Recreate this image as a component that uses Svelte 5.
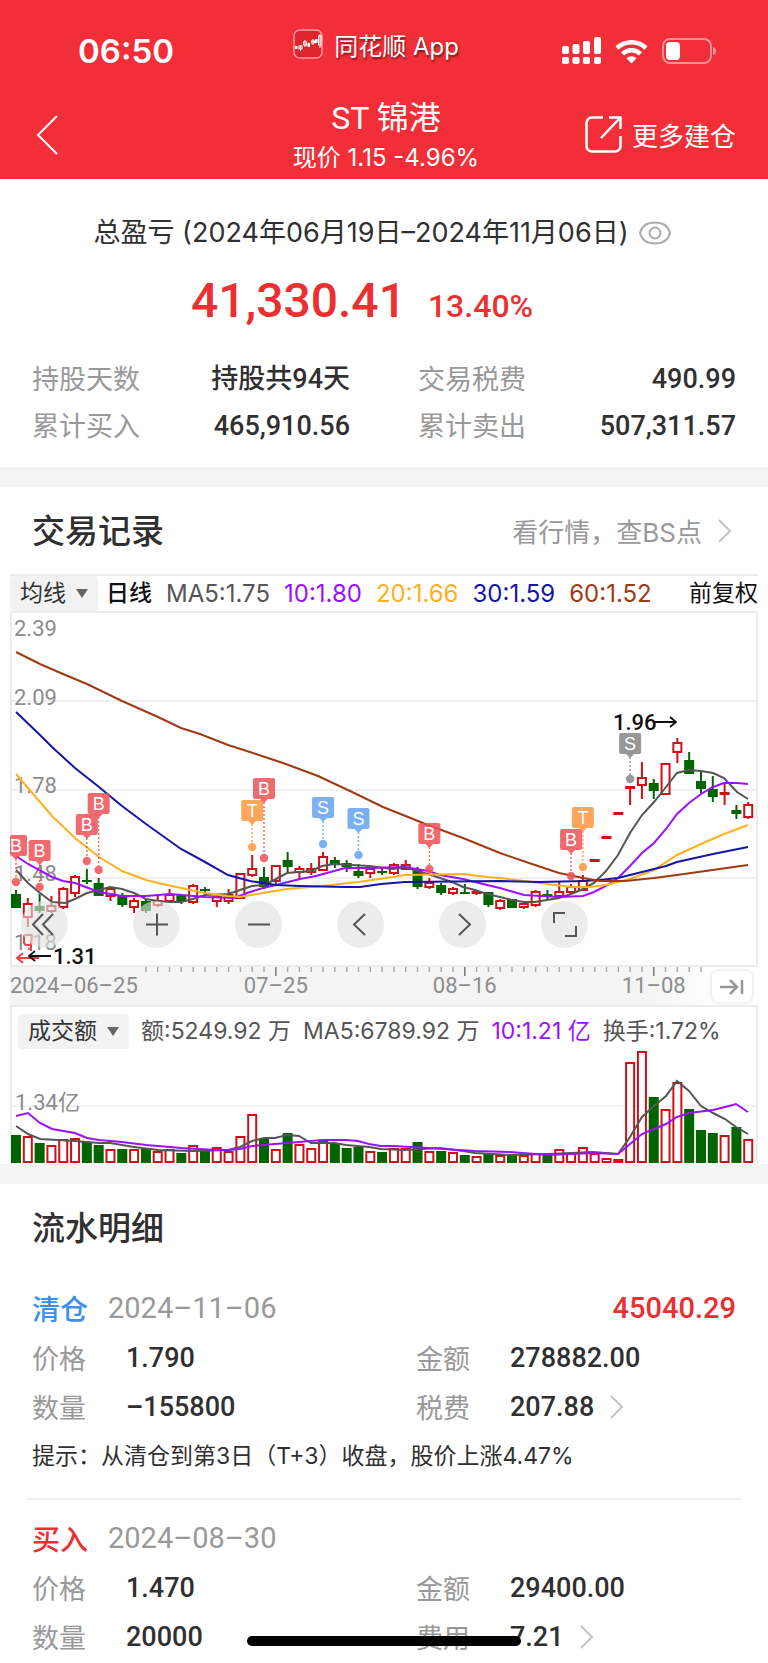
<script>
  const STEP = 11.81;
  const FIRST_X = 16;
  const x = (i) => FIRST_X + i * STEP;

  // [up/down, high, body top, body bottom, low, volume top]
  const candles = [
    ['d', 278, 282, 296, 296, 129],
    ['u', 286, 292, 305, 315, 130],
    ['d', 282, 294, 299, 301, 137],
    ['u', 284, 294, 299, 301, 139],
    ['u', 275, 277, 295, 297, 133],
    ['u', 263, 265, 281, 285, 132],
    ['d', 257, 268, 270, 272, 136],
    ['d', 266, 271, 284, 284, 139],
    ['u', 275, 277, 284, 289, 143],
    ['d', 281, 283, 293, 295, 143],
    ['u', 286, 289, 295, 301, 143],
    ['d', 287, 289, 299, 301, 143],
    ['u', 284, 289, 293, 295, 145],
    ['u', 277, 283, 289, 291, 143],
    ['d', 283, 283, 290, 292, 147],
    ['u', 272, 274, 290, 292, 139],
    ['d', 275, 277, 279, 282, 145],
    ['u', 283, 285, 289, 295, 141],
    ['u', 277, 283, 289, 292, 145],
    ['u', 262, 262, 286, 286, 130],
    ['u', 243, 257, 263, 265, 108],
    ['d', 255, 265, 275, 277, 132],
    ['u', 253, 254, 269, 272, 143],
    ['d', 240, 248, 255, 261, 127],
    ['u', 254, 257, 260, 268, 138],
    ['u', 251, 257, 260, 263, 142],
    ['u', 240, 245, 258, 258, 135],
    ['d', 245, 248, 253, 256, 138],
    ['d', 248, 251, 255, 260, 142],
    ['d', 252, 259, 264, 266, 141],
    ['u', 256, 257, 261, 266, 145],
    ['d', 255, 259, 260, 263, 146],
    ['u', 251, 253, 261, 263, 142],
    ['u', 248, 253, 257, 258, 142],
    ['d', 255, 257, 275, 277, 136],
    ['u', 266, 271, 275, 277, 145],
    ['d', 271, 273, 281, 283, 145],
    ['u', 275, 277, 281, 283, 146],
    ['d', 272, 280, 281, 281, 149],
    ['u', 278, 280, 281, 283, 150],
    ['d', 280, 280, 293, 295, 147],
    ['u', 287, 289, 296, 298, 149],
    ['d', 287, 287, 296, 296, 149],
    ['u', 290, 292, 295, 297, 149],
    ['u', 278, 280, 293, 295, 147],
    ['d', 278, 282, 284, 288, 148],
    ['u', 270, 280, 284, 285, 143],
    ['u', 272, 275, 280, 282, 147],
    ['u', 263, 269, 278, 278, 141],
    ['u', 248, 248, 249, 249, 147],
    ['u', 225, 225, 226, 226, 152],
    ['u', 201, 201, 202, 202, 153],
    ['u', 175, 175, 176, 193, 56],
    ['u', 150, 166, 173, 187, 45],
    ['d', 167, 171, 179, 187, 91],
    ['u', 151, 152, 182, 182, 103],
    ['u', 126, 131, 140, 151, 76],
    ['d', 140, 148, 162, 162, 103],
    ['d', 159, 169, 177, 181, 124],
    ['d', 164, 177, 185, 190, 127],
    ['u', 172, 181, 182, 193, 129],
    ['d', 193, 198, 202, 207, 121],
    ['u', 190, 193, 205, 207, 133]
  ];

  const averages = [
    {
      color: '#555555',
      points:
        '16,258 28,271 40,281 52,290 65,291 75,287 87,281 99,278 110,275 122,277 134,281 146,287 158,289 170,290 181,290 193,287 205,283 228,282 240,278 252,274 264,273 276,267 287,261 311,259 322,254 334,252 369,254 393,257 405,255 420,260 428,262 440,266 452,270 463,275 475,278 487,282 500,285 512,288 524,290 535,290 547,288 559,286 571,282 583,277 594,271 606,259 618,243 630,221 642,203 654,190 666,175 677,161 689,158 701,159 713,161 724,166 737,180 748,187'
    },
    {
      color: '#9b10ff',
      points:
        '16,244 28,252 52,265 63,269 75,271 99,280 122,284 146,284 170,282 205,285 234,286 250,280 263,276 276,273 300,267 316,264 345,256 369,256 405,255 428,259 440,263 463,267 487,273 500,276 524,283 559,285 583,284 594,280 606,274 618,266 630,254 642,241 654,231 666,217 677,202 689,191 701,182 713,175 724,171 737,171 748,172'
    },
    {
      color: '#ffb020',
      points:
        '16,162 28,176 52,204 75,226 99,245 122,259 146,268 158,271 181,276 205,281 228,284 240,285 263,281 287,277 322,274 358,270 393,265 405,263 463,262 487,265 500,266 524,269 547,272 571,275 590,275 606,273 630,267 654,258 677,243 701,232 724,222 748,213'
    },
    {
      color: '#1515a8',
      points:
        '16,100 40,123 52,135 75,156 99,175 122,194 146,212 181,237 205,250 228,263 250,269 276,273 300,274 345,275 360,275 381,272 405,270 500,269 540,270 583,269 600,268 618,266 642,260 666,254 677,250 713,242 748,235'
    },
    {
      color: '#a03a12',
      points:
        '16,40 40,52 63,62 87,72 122,89 158,105 181,116 200,122 228,133 250,140 283,151 318,164 350,179 383,195 428,213 463,226 500,241 529,251 559,261 583,266 600,269 625,269 654,266 677,263 748,253'
    }
  ];

  const volumeAverages = [
    {
      color: '#555555',
      points:
        '16,120 28,128 40,133 75,135 99,137 110,137 134,141 158,144 193,145 228,144 240,141 252,135 264,132 275,132 287,129 299,130 311,137 334,137 346,139 369,141 381,143 405,144 440,142 463,145 475,147 510,149 548,148 593,146 618,148 630,131 642,111 654,100 666,90 677,75 689,85 701,100 713,107 725,113 736,121 748,128'
    },
    {
      color: '#9b10ff',
      points:
        '16,110 28,107 40,117 52,123 75,127 87,132 99,134 122,136 146,139 170,141 181,142 216,144 228,144 240,143 252,140 275,138 299,136 322,134 346,134 358,135 369,138 381,140 393,140 428,142 475,145 510,146 548,149 571,148 593,147 618,148 642,128 654,123 666,118 677,111 689,107 713,104 725,101 736,98 748,106'
    }
  ];

  const markers = [
    { i: 0, label: 'B', y: 223, dot: 270 },
    { i: 2, label: 'B', y: 228, dot: 275 },
    { i: 6, label: 'B', y: 202, dot: 249 },
    { i: 7, label: 'B', y: 181, dot: 258 },
    { i: 20, label: 'T', y: 188, dot: 235 },
    { i: 21, label: 'B', y: 166, dot: 246 },
    { i: 26, label: 'S', y: 185, dot: 232 },
    { i: 29, label: 'S', y: 196, dot: 243 },
    { i: 35, label: 'B', y: 211, dot: 257 },
    { i: 47, label: 'B', y: 217, dot: 264 },
    { i: 48, label: 'T', y: 195, dot: 255 },
    { i: 52, label: 'S', y: 121, dot: 167, muted: true }
  ];
  const markerColors = { B: '#ee5258', T: '#ff9640', S: '#64a4f2' };
  const markerColor = (m) => (m.muted ? '#858585' : markerColors[m.label]);
  // the first flag is cut by the frame's left side
  const markerLeft = (m) => Math.max(x(m.i) - 11, 10);

  const priceLabels = [
    { text: '2.39', y: 24 },
    { text: '2.09', y: 93 },
    { text: '1.78', y: 181 },
    { text: '1.48', y: 269 },
    { text: '1.18', y: 338 }
  ];

  const ticks = Array.from({ length: 48 }, (_, n) => n + 11);
  const dates = [
    { i: 22, text: '07–25' },
    { i: 38, text: '08–16' },
    { i: 54, text: '11–08' }
  ];

  const summary = [
    ['持股天数', '持股共94天'],
    ['交易税费', '490.99'],
    ['累计买入', '465,910.56'],
    ['累计卖出', '507,311.57']
  ];

  const indicators = [
    { text: 'MA5:1.75', cls: 'ma5' },
    { text: '10:1.80', cls: 'ma10' },
    { text: '20:1.66', cls: 'ma20' },
    { text: '30:1.59', cls: 'ma30' },
    { text: '60:1.52', cls: 'ma60' }
  ];

  const controls = [
    { name: '最早', d: 'M22 13 12 23.500l10 10.500M32 13 22 23.500l10 10.500' },
    { name: '放大', d: 'M13 23.500h22M24 12.500v22' },
    { name: '缩小', d: 'M13 23.500h22' },
    { name: '向左', d: 'M28 13 17 23.500 28 34' },
    { name: '向右', d: 'M20 13 31 23.500 20 34' },
    { name: '全屏', d: 'M13 22v-10h11M35 25v10h-11' }
  ];

  const records = [
    {
      type: '清仓',
      date: '2024–11–06',
      profit: '45040.29',
      price: '1.790',
      amount: '278882.00',
      count: '–155800',
      feeLabel: '税费',
      fee: '207.88',
      tip: '提示：从清仓到第3日（T+3）收盘，股价上涨4.47%'
    },
    {
      type: '买入',
      date: '2024–08–30',
      price: '1.470',
      amount: '29400.00',
      count: '20000',
      feeLabel: '费用',
      fee: '7.21'
    }
  ];
</script>

<div class="page">
  <header>
    <div class="status">
      <span class="time">06:50</span>
      <span class="app-name">
        <svg width="30" height="30" viewBox="0 0 30 30">
          <rect x="1" y="1" width="28" height="28" rx="6" fill="#e0242c" stroke="#ff9a9e" stroke-width="1.500" />
          <g stroke="#fff" fill="none" stroke-width="1">
            <path d="M7.500 16v6M12 11v7M20 10v6M27 5v14" />
            <rect x="6" y="17" width="3" height="3" />
            <rect x="10.500" y="13" width="3" height="3" />
            <rect x="18.500" y="12" width="3" height="2" />
            <rect x="25.500" y="7" width="2.500" height="9" />
          </g>
          <path d="M2 17h2.500v3H2zM14.500 14h2.500v4h-2.500zM22 10h2.500v4h-2.500z" fill="#fff" />
        </svg>
        同花顺 App
      </span>
      <span class="status-icons">
        <svg width="39" height="28" viewBox="0 0 39 28" fill="#fff">
          <rect x="0" y="9" width="7" height="8" rx="2" />
          <rect x="10.500" y="7" width="7" height="10" rx="2" />
          <rect x="21" y="4" width="7" height="13" rx="2" />
          <rect x="32" y="0" width="7" height="17" rx="2" />
          <rect x="0" y="20" width="7" height="7" rx="2" />
          <rect x="10.500" y="20" width="7" height="7" rx="2" />
          <rect x="21" y="20" width="7" height="7" rx="2" />
          <rect x="32" y="20" width="7" height="7" rx="2" />
        </svg>
        <svg width="33" height="25" viewBox="0 0 33 25" fill="none" stroke="#fff" stroke-width="4.500">
          <path d="M2 9a21 21 0 0 1 29 0" />
          <path d="M7.500 14.800a13 13 0 0 1 18 0" />
          <path d="M16.500 24.500l-5-5.200a7.200 7.200 0 0 1 10 0z" fill="#fff" stroke="none" />
        </svg>
        <svg width="54" height="26" viewBox="0 0 54 26">
          <rect x="1" y="1" width="48" height="24" rx="7" fill="none" stroke="#fa9094" stroke-width="2" />
          <rect x="4" y="4" width="14" height="18" rx="4" fill="#fff" />
          <path d="M51 9q3 1 3 4t-3 4z" fill="#fa9094" />
        </svg>
      </span>
    </div>
    <div class="nav">
      <button class="back" aria-label="返回">
        <svg width="22" height="40" viewBox="0 0 22 40" fill="none" stroke="#fff" stroke-width="2">
          <path d="M21 1 2 20l19 19" />
        </svg>
      </button>
      <div class="heading">
        <h1>ST 锦港</h1>
        <p>现价 1.15 -4.96%</p>
      </div>
      <button class="more">
        <svg width="37" height="37" viewBox="0 0 37 37" fill="none" stroke="#fff" stroke-width="2.500">
          <path d="M18 1.500H7A5.500 5.500 0 0 0 1.500 7v23A5.500 5.500 0 0 0 7 35.500h23a5.500 5.500 0 0 0 5.500-5.500V20" />
          <path d="M24 1.500h11.500V13M35 2 16 22" />
        </svg>
        更多建仓
      </button>
    </div>
  </header>

  <section class="summary">
    <div class="period">
      <span>总盈亏 (2024年06月19日–2024年11月06日)</span>
      <button aria-label="隐藏金额">
        <svg width="32" height="24" viewBox="0 0 32 24" fill="none" stroke="#aaa" stroke-width="2">
          <path d="M1 12C3 4.500 9 1.500 16 1.500S29 4.500 31 12c-2 7.500-8 10.500-15 10.500S3 19.500 1 12z" />
          <circle cx="16" cy="12" r="5.500" />
        </svg>
      </button>
    </div>
    <div class="total">
      <strong>41,330.41</strong>
      <span>13.40%</span>
    </div>
    <dl>
      {#each summary as [label, value]}
        <div>
          <dt>{label}</dt>
          <dd>{value}</dd>
        </div>
      {/each}
    </dl>
  </section>

  <section class="trades">
    <div class="section-head">
      <h2>交易记录</h2>
      <a href="#quote">
        看行情，查BS点
        <svg width="14" height="24" viewBox="0 0 14 24" fill="none" stroke="#c4c4c4" stroke-width="2">
          <path d="M1 1l11 11L1 23" />
        </svg>
      </a>
    </div>

    <div class="toolbar">
      <label class="picker">
        <select aria-label="主图指标">
          <option>均线</option>
        </select>
        <svg width="12" height="9" viewBox="0 0 12 9"><path d="M0 0h12L6 9z" fill="#666" /></svg>
      </label>
      <span class="cycle">日线</span>
      {#each indicators as item}
        <span class={item.cls}>{item.text}</span>
      {/each}
      <span class="adjust">前复权</span>
    </div>

    <div class="chart">
      <svg class="plot" viewBox="10 1 748 352">
        <path d="M10 89h748M10 178h748M10 266h748" stroke="#ececec" stroke-width="1.500" />
        <path d="M11 1v352M757 1v352" stroke="#ececec" stroke-width="2" />
        {#each priceLabels as label}
          <text x="14" y={label.y} class="axis-text">{label.text}</text>
        {/each}

        {#each candles as [dir, high, top, bottom, low], i}
          {#if dir === 'd'}
            <path d="M{x(i)} {high}V{low}" stroke="#006400" stroke-width="2" />
            <rect x={x(i) - 5} y={top} width="10" height={Math.max(bottom - top, 2)} fill="#006400" />
          {:else}
            <path d="M{x(i)} {high}V{top}M{x(i)} {bottom}V{low}" stroke="#cf1016" stroke-width="2" />
            <rect
              x={x(i) - 4}
              y={top}
              width="8"
              height={bottom - top}
              fill="#fff"
              stroke="#cf1016"
              stroke-width="2"
            />
          {/if}
        {/each}

        {#each averages as line}
          <polyline points={line.points} fill="none" stroke={line.color} stroke-width="2" />
        {/each}

        {#each markers as m}
          <g opacity="0.85">
            <path
              d="M{x(m.i)} {m.y + 24}V{m.dot - 4}"
              stroke={markerColor(m)}
              stroke-width="1.500"
              stroke-dasharray="2 2"
            />
            <circle cx={x(m.i)} cy={m.dot} r="4.200" fill={markerColor(m)} />
            <rect
              x={markerLeft(m)}
              y={m.y}
              width={x(m.i) + 11 - markerLeft(m)}
              height="21"
              rx="2"
              fill={markerColor(m)}
            />
            <path d="M{x(m.i) - 4} {m.y + 21}h8l-4 4z" fill={markerColor(m)} />
          </g>
          <text x={x(m.i)} y={m.y + 17} class="marker-text">{m.label}</text>
        {/each}

        <g fill="none" stroke="#f04040" stroke-width="2">
          <path d="M32 323h-6q-2 0-2 2v5q0 3 3 3h4zM31 332v7M39 346H17M23 341l-6 5 6 5" />
        </g>
        <g fill="none" stroke="#111" stroke-width="1.800">
          <path d="M51 344H30M35 339l-6 5 6 5" />
          <path d="M654 110h22M670 105l6 5-6 5" />
        </g>
        <text x="53" y="352" class="peak-text">1.31</text>
        <text x="613" y="118" class="peak-text">1.96</text>
      </svg>
      <div class="controls">
        {#each controls as control}
          <button aria-label={control.name}>
            <svg width="47" height="47" viewBox="0 0 47 47" fill="none" stroke="#555" stroke-width="2">
              <path d={control.d} />
            </svg>
          </button>
        {/each}
      </div>
    </div>

    <div class="axis">
      <svg class="plot" viewBox="10 0 748 38">
        {#each ticks as i}
          <path d="M{x(i)} 0v{i % 16 === 6 ? 9 : 5}" stroke={i % 16 === 6 ? '#777' : '#aaa'} stroke-width="1.500" />
        {/each}
        <text x="10" y="26" class="axis-text">2024–06–25</text>
        {#each dates as date}
          <text x={x(date.i)} y="26" class="axis-text" text-anchor="middle">{date.text}</text>
        {/each}
      </svg>
      <button class="latest" aria-label="最新">
        <svg width="24" height="16" viewBox="0 0 24 16" fill="none" stroke="#999" stroke-width="2.500">
          <path d="M0 8h17M10 1l7 7-7 7M22 1v14" />
        </svg>
      </button>
    </div>

    <div class="volume">
      <div class="toolbar">
        <label class="picker">
          <select aria-label="副图指标">
            <option>成交额</option>
          </select>
          <svg width="12" height="9" viewBox="0 0 12 9"><path d="M0 0h12L6 9z" fill="#666" /></svg>
        </label>
        <span>额:5249.92 万</span>
        <span>MA5:6789.92 万</span>
        <span class="ma10">10:1.21 亿</span>
        <span>换手:1.72%</span>
      </div>
      <svg class="plot" viewBox="12 44 744 114">
        <path d="M12 100h744" stroke="#ececec" stroke-width="1.500" />
        <text x="15" y="104" class="axis-text">1.34亿</text>
        {#each candles as [dir, , , , , top], i}
          {#if dir === 'd'}
            <rect x={x(i) - 5} y={top} width="10" height={157 - top} fill="#006400" />
          {:else}
            <rect
              x={x(i) - 4}
              y={top + 1}
              width="8"
              height={155 - top}
              fill="#fff"
              stroke="#cf1016"
              stroke-width="2"
            />
          {/if}
        {/each}
        {#each volumeAverages as line}
          <polyline points={line.points} fill="none" stroke={line.color} stroke-width="2" />
        {/each}
      </svg>
    </div>
  </section>

  <section class="details">
    <h2>流水明细</h2>
    {#each records as record}
      <article>
        <div class="record-head">
          <span class="type" class:sell={record.type === '清仓'}>{record.type}</span>
          <time>{record.date}</time>
          {#if record.profit}
            <span class="profit">{record.profit}</span>
          {/if}
        </div>
        <dl>
          <div><dt>价格</dt><dd>{record.price}</dd></div>
          <div><dt>金额</dt><dd>{record.amount}</dd></div>
          <div><dt>数量</dt><dd>{record.count}</dd></div>
          <div>
            <dt>{record.feeLabel}</dt>
            <dd>{record.fee}</dd>
            <svg width="14" height="24" viewBox="0 0 14 24" fill="none" stroke="#c4c4c4" stroke-width="2">
              <path d="M1 1l11 11L1 23" />
            </svg>
          </div>
        </dl>
        {#if record.tip}
          <p class="tip">{record.tip}</p>
        {/if}
      </article>
    {/each}
  </section>

  <div class="home-indicator"></div>
</div>

<style>
  :global(body) {
    margin: 0;
    background: #fff;
  }

  .page {
    font-family: Inter, "Noto Sans CJK SC", sans-serif;
    color: #303030;
    overflow: hidden;
  }

  h1,
  h2,
  p,
  dl,
  dd {
    margin: 0;
  }

  button {
    display: flex;
    align-items: center;
    padding: 0;
    border: none;
    background: none;
    font: inherit;
    color: inherit;
    cursor: pointer;
  }

  a {
    color: inherit;
    text-decoration: none;
  }

  header {
    background: #f22f38;
    color: #fff;
    height: 179px;
  }

  .status {
    display: grid;
    grid-template-columns: 1fr auto 1fr;
    align-items: center;
    height: 90px;
    padding: 6px 52px 0 78px;
    box-sizing: border-box;
  }

  .time {
    font-size: 33px;
    font-weight: 600;
    padding-top: 6px;
  }

  .app-name {
    display: flex;
    align-items: center;
    gap: 11px;
    padding-right: 42px;
    padding-bottom: 8px;
    font-size: 24px;
    text-shadow: 1px 2px 2px rgba(0, 0, 0, 0.5);
  }

  .status-icons {
    display: flex;
    align-items: center;
    justify-content: flex-end;
    gap: 14px;
    padding-top: 6px;
  }

  .nav {
    display: grid;
    grid-template-columns: 1fr auto 1fr;
    align-items: center;
    height: 89px;
    padding: 0 32px 0 36px;
  }

  .heading {
    text-align: center;
  }

  h1 {
    font-family: Roboto, "Noto Sans CJK SC", sans-serif;
    font-size: 32px;
    line-height: 46px;
    font-weight: 400;
  }

  .heading p {
    font-size: 24px;
    line-height: 34px;
  }

  .more {
    justify-self: end;
    gap: 10px;
    font-size: 26px;
  }

  .summary {
    padding: 34px 32px 17px;
    border-bottom: 20px solid #f4f4f4;
  }

  .period {
    display: flex;
    align-items: center;
    justify-content: center;
    gap: 10px;
    padding-right: 4px;
    font-size: 27px;
    line-height: 40px;
  }

  .total {
    display: flex;
    align-items: baseline;
    justify-content: center;
    gap: 22px;
    margin-top: 18px;
    padding-right: 44px;
    font-family: Roboto, sans-serif;
    font-weight: 500;
    line-height: 60px;
    color: #ea3030;
  }

  .total strong {
    font-size: 48px;
    font-weight: 500;
  }

  .total span {
    font-size: 32px;
  }

  .summary dl {
    display: grid;
    grid-template-columns: 1fr 1fr;
    column-gap: 68px;
    margin-top: 20px;
  }

  .summary dl div {
    display: flex;
    justify-content: space-between;
    line-height: 47px;
  }

  dt {
    font-size: 27px;
    color: #999;
  }

  dd {
    font-family: Roboto, "Noto Sans CJK SC", sans-serif;
    font-size: 27px;
    font-weight: 500;
  }

  .section-head {
    display: flex;
    align-items: center;
    justify-content: space-between;
    height: 87px;
    padding: 0 36px 0 32px;
  }

  h2 {
    font-size: 33px;
    line-height: 48px;
    font-weight: 500;
  }

  .section-head a {
    display: flex;
    align-items: center;
    gap: 16px;
    font-size: 26px;
    color: #999;
  }

  .toolbar {
    display: flex;
    align-items: center;
    gap: 14px;
    font-size: 24px;
    line-height: 35px;
    color: #555;
    white-space: nowrap;
  }

  .trades > .toolbar {
    margin: 0 10px;
    border-top: 2px solid #ececec;
  }

  .picker {
    display: flex;
    align-items: center;
    gap: 10px;
    height: 35px;
    padding: 0 10px;
    border-radius: 4px;
    background: #f2f2f2;
  }

  select {
    appearance: none;
    padding: 0;
    border: none;
    background: none;
    font: inherit;
    font-size: 23px;
    color: #333;
  }

  .cycle,
  .adjust {
    font-size: 23px;
    color: #111;
  }

  .cycle {
    margin-left: -6px;
    font-weight: 500;
  }

  .adjust {
    margin-left: auto;
  }

  .ma10 {
    color: #9b10ff;
  }

  .ma20 {
    color: #ffb020;
  }

  .ma30 {
    color: #1515a8;
  }

  .ma60 {
    color: #a03a12;
  }

  .chart {
    position: relative;
    margin: 0 10px;
    border-top: 2px solid #ececec;
    border-bottom: 2px solid #ececec;
  }

  .plot {
    display: block;
    width: 100%;
    overflow: visible;
  }

  .axis-text {
    font-family: Roboto, "Noto Sans CJK SC", sans-serif;
    font-size: 22px;
    fill: #8c8c8c;
  }

  .peak-text {
    font-family: Roboto, sans-serif;
    font-size: 22px;
    font-weight: 500;
    fill: #111;
  }

  .marker-text {
    font-family: "Liberation Sans", sans-serif;
    font-size: 18px;
    fill: #fff;
    text-anchor: middle;
  }

  .controls {
    position: absolute;
    left: 11px;
    bottom: 17px;
    display: flex;
    gap: 55px;
  }

  .controls button {
    border-radius: 50%;
    background: rgba(224, 224, 224, 0.62);
  }

  .controls button:first-child {
    margin-right: 10px;
  }

  .axis {
    position: relative;
    margin: 0 10px;
    background: linear-gradient(90deg, #f4f4f4 85%, #fff 95%);
  }

  .latest {
    position: absolute;
    right: 6px;
    top: 4px;
    justify-content: center;
    width: 40px;
    height: 31px;
    border-radius: 6px;
    background: #fff;
    box-shadow: 0 0 4px rgba(0, 0, 0, 0.15);
  }

  .volume {
    margin: 0 10px;
    border: 2px solid #ececec;
    border-bottom: none;
  }

  .volume .toolbar {
    gap: 12px;
    padding: 7px 6px 1px;
    font-size: 23px;
  }

  .details {
    border-top: 20px solid #f4f4f4;
    padding-top: 20px;
  }

  .details h2 {
    padding: 0 32px;
  }

  article {
    margin: 0 26px;
    padding: 12px 6px 16px;
    border-bottom: 2px solid #f0f0f0;
  }

  h2 + article {
    padding-top: 30px;
  }

  article:last-child {
    border-bottom: none;
  }

  .record-head {
    display: flex;
    align-items: center;
    gap: 20px;
    height: 51px;
    font-family: Roboto, "Noto Sans CJK SC", sans-serif;
    font-size: 29px;
  }

  .type {
    font-size: 28px;
    font-weight: 500;
    color: #ea3030;
  }

  .type.sell {
    color: #3f8ff0;
  }

  time {
    color: #999;
  }

  .profit {
    margin-left: auto;
    font-weight: 500;
    color: #ea3030;
  }

  article dl {
    display: grid;
    grid-template-columns: 12fr 10fr;
  }

  article dl div {
    display: flex;
    align-items: center;
    height: 49px;
  }

  article dt {
    width: 94px;
  }

  article dl svg {
    margin-left: 16px;
  }

  .tip {
    font-size: 23px;
    line-height: 51px;
  }

  .home-indicator {
    position: fixed;
    left: 50%;
    bottom: 17px;
    width: 274px;
    height: 10px;
    margin-left: -137px;
    border-radius: 5px;
    background: #000;
  }
</style>
